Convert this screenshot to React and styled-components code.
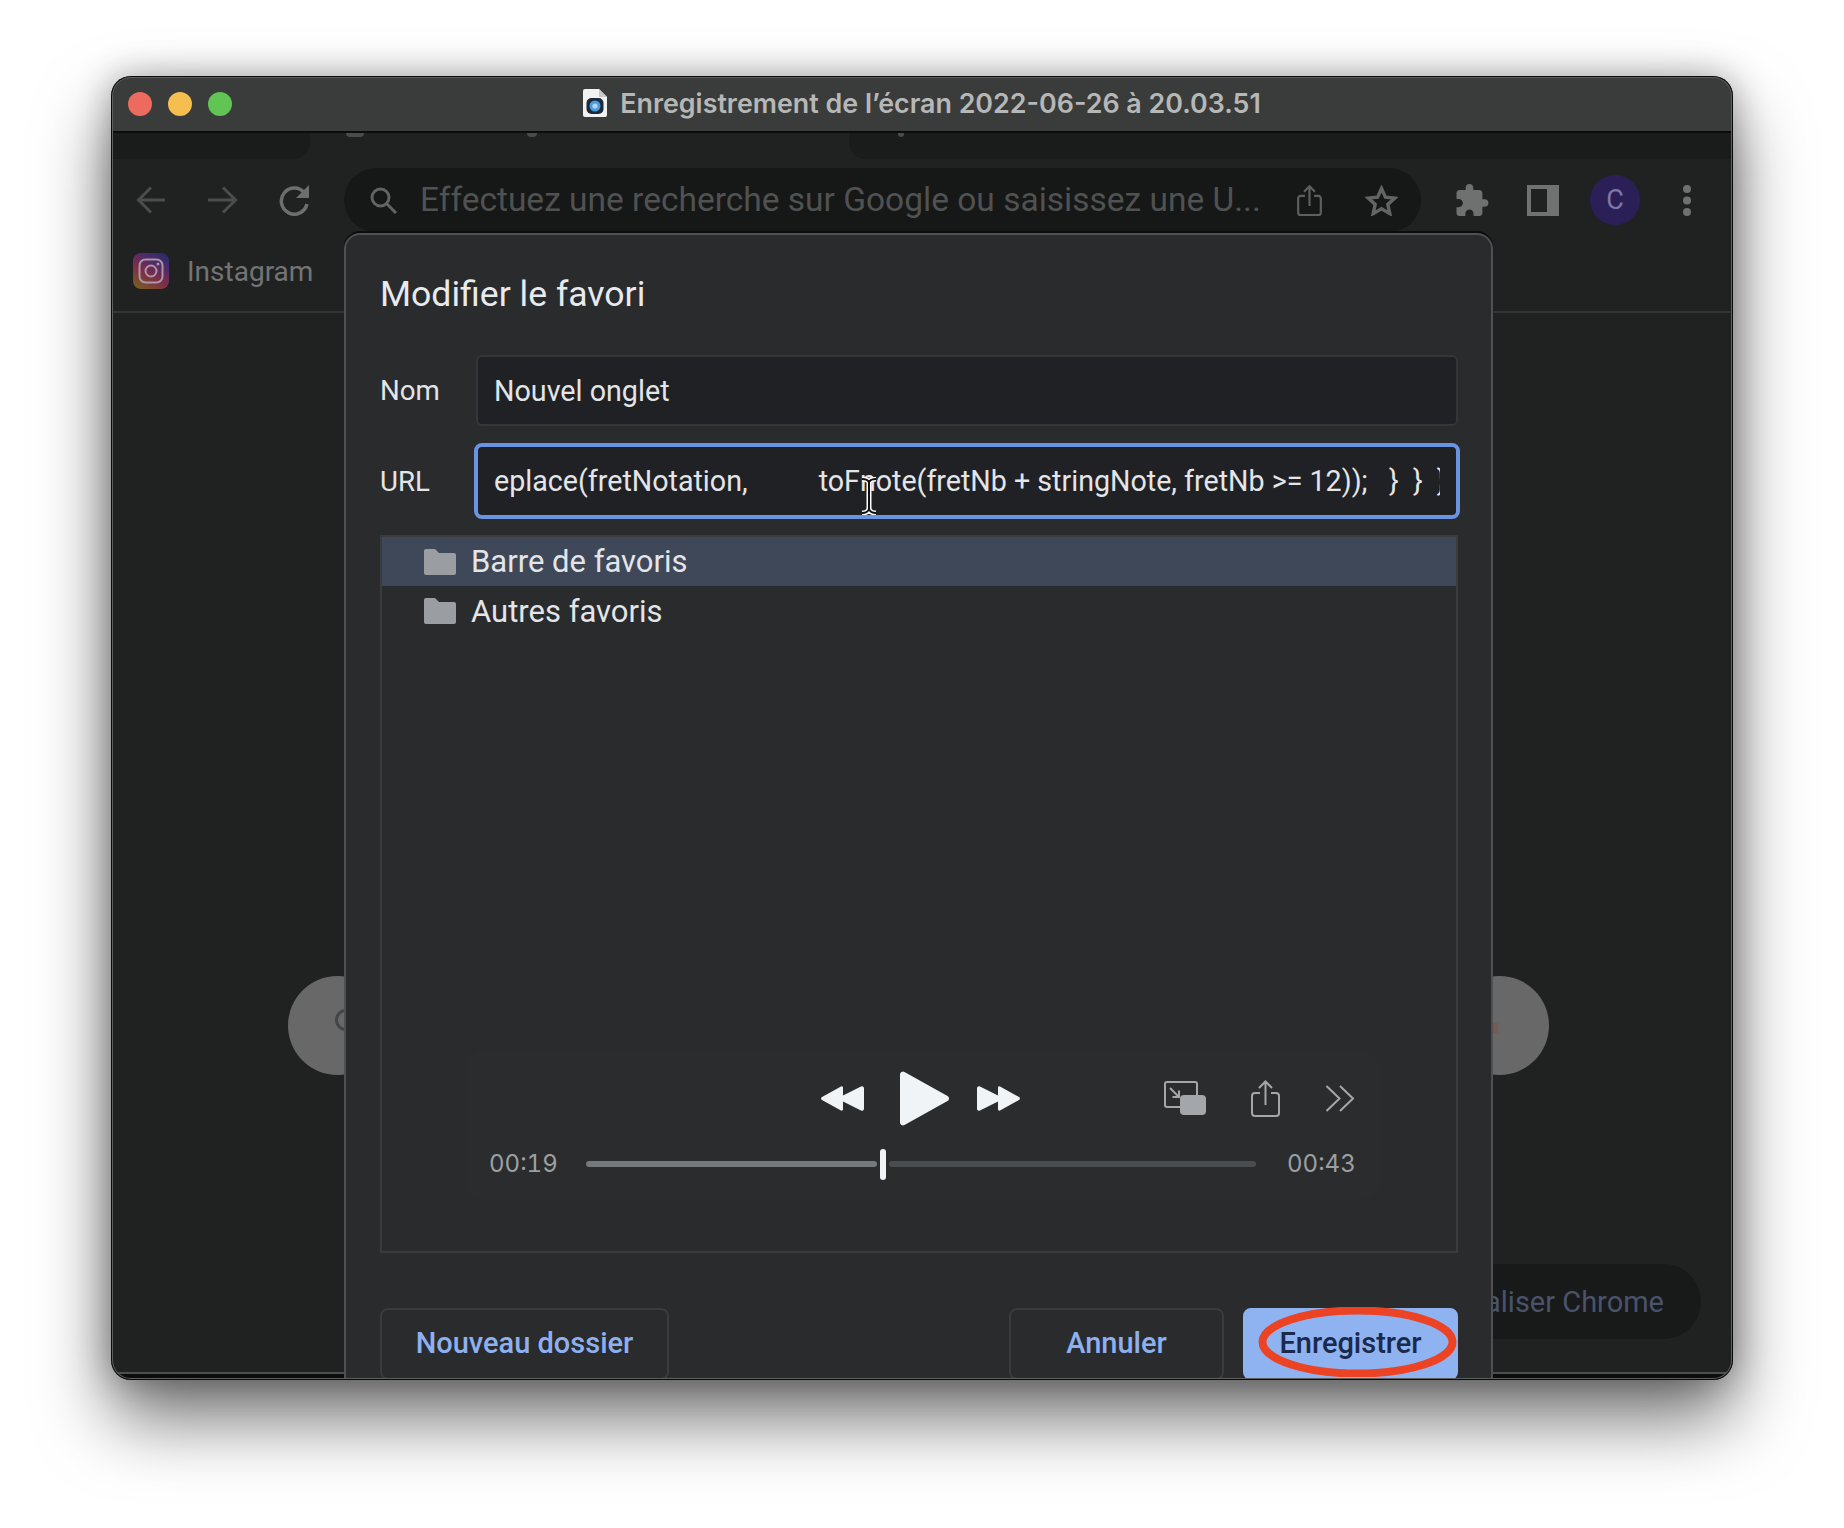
import React from 'react'
import styled, { createGlobalStyle } from 'styled-components'

const GlobalStyle = createGlobalStyle`
  html, body {
    margin: 0;
    padding: 0;
    background: #ffffff;
  }
  body {
    font-family: Roboto, "Liberation Sans", sans-serif;
  }
`

const Page = styled.div`
  width: 1844px;
  height: 1528px;
  padding: 76px 111px 0 111px;
  box-sizing: border-box;
  background: #ffffff;
  overflow: hidden;
`

const Window = styled.div`
  position: relative;
  width: 1622px;
  height: 1304px;
  border-radius: 20px;
  overflow: hidden;
  display: flex;
  flex-direction: column;
  background: #202222;
`

const WindowShadow = styled.div`
  border-radius: 20px;
  width: 1622px;
  box-shadow: 0 38px 72px rgba(0, 0, 0, 0.56), 0 0 34px rgba(0, 0, 0, 0.3);
`

const WindowEdge = styled.div`
  position: absolute;
  inset: 0;
  border-radius: 20px;
  pointer-events: none;
  box-shadow: inset 0 0 0 1px #0a0a0a, inset 0 0 0 2px #5e5f5f;
`

const TitleBar = styled.div`
  flex: none;
  height: 55px;
  display: grid;
  grid-template-columns: 1fr auto 1fr;
  align-items: center;
  padding: 0 17px;
  background: #3a3c3b;
  border-bottom: 2px solid #0c0c0c;
`

const Lights = styled.div`
  display: flex;
  gap: 16px;
`

const Light = styled.span`
  width: 24px;
  height: 24px;
  border-radius: 50%;
  background: ${({ $color }) => $color};
`

const WindowTitle = styled.div`
  display: flex;
  align-items: center;
  gap: 13px;
  padding-bottom: 2px;
  font-family: Inter, Roboto, sans-serif;
  font-size: 26.85px;
  font-weight: 600;
  color: #b6b7b7;
  white-space: nowrap;
`

const TabStrip = styled.div`
  flex: none;
  height: 26px;
  display: grid;
  grid-template-columns: 199px 539px 1fr;
  background: #202222;
`

const OtherTab = styled.div`
  background: #1a1b1b;
  border-radius: ${({ $side }) => ($side === 'left' ? '0 0 16px 0' : '0 0 0 16px')};
  padding-left: 49px;
`

const ActiveTab = styled.div`
  display: flex;
  align-items: flex-start;
  padding-left: 36px;
  gap: 163px;
`

const TabRemnant = styled.span`
  display: block;
  width: ${({ $w }) => $w}px;
  height: 4px;
  border-radius: 0 0 8px 8px;
  background: #4a4b4b;
`

const Toolbar = styled.div`
  flex: none;
  height: 82px;
  display: flex;
  align-items: center;
  padding-left: 25px;
  background: #202222;
`

const Slot = styled.span`
  display: inline-flex;
  flex: none;
  margin-left: ${({ $ml }) => ($ml === 'auto' ? 'auto' : `${$ml || 0}px`)};
`

const Omnibox = styled.div`
  flex: none;
  width: 1077px;
  height: 64px;
  margin-left: 34px;
  box-sizing: border-box;
  display: flex;
  align-items: center;
  padding: 0 23px 0 26px;
  border-radius: 32px;
  background: #161717;
`

const OmniText = styled.span`
  margin-left: 23px;
  padding-bottom: 2px;
  font-size: 33.5px;
  color: #505151;
  white-space: nowrap;
`

const Avatar = styled.span`
  flex: none;
  width: 50px;
  height: 50px;
  margin-left: 31px;
  display: flex;
  align-items: center;
  justify-content: center;
  border-radius: 50%;
  background: #2b1f58;
  color: #7f78a6;
  font-size: 27px;
`

const BookmarkBar = styled.div`
  flex: none;
  height: 72px;
  box-sizing: border-box;
  display: flex;
  align-items: center;
  gap: 18px;
  padding: 0 0 10px 22px;
  border-bottom: 2px solid #333535;
  background: #202222;
`

const BookmarkLabel = styled.span`
  font-size: 28px;
  color: #737474;
`

const NewTabArea = styled.div`
  position: relative;
  flex: 1;
  display: flex;
  justify-content: space-between;
  align-items: flex-start;
  padding: 663px 184px 0 177px;
  background: #202222;
`

const Shortcut = styled.div`
  position: relative;
  width: 99px;
  height: 99px;
  border-radius: 50%;
  background: #686868;
`

const ShortcutRing = styled.span`
  position: absolute;
  left: 47px;
  top: 33px;
  width: 16px;
  height: 16px;
  border: 3px solid #454545;
  border-radius: 50%;
`

const ShortcutMark = styled.span`
  position: absolute;
  left: 40px;
  top: 47px;
  width: 8px;
  height: 10px;
  background: #7a5858;
`

const CustomizeButton = styled.div`
  position: absolute;
  right: 32px;
  bottom: 33px;
  height: 75px;
  padding: 0 37px 0 60px;
  display: flex;
  align-items: center;
  border-radius: 38px;
  background: #181919;
  color: #49536c;
  font-size: 29px;
  white-space: nowrap;
`

const WindowFoot = styled.div`
  flex: none;
  height: 6px;
  border-top: 2px solid #4c4d4d;
  background: #0c0c0c;
`

const Dialog = styled.div`
  position: absolute;
  left: 233px;
  top: 157px;
  width: 1149px;
  height: 1147px;
  box-sizing: border-box;
  padding: 38px 33px 0 34px;
  border: 2px solid #4f5051;
  border-bottom: 0;
  border-radius: 16px 16px 0 0;
  background: #292b2d;
  box-shadow: 0 -2px 0 #0c0c0c;
  color: #e8eaed;
`

const DialogTitle = styled.h2`
  margin: 0 0 42px;
  height: 40px;
  line-height: 42px;
  font-size: 35.6px;
  font-weight: 400;
  color: #e8eaed;
`

const FieldRow = styled.div`
  display: grid;
  grid-template-columns: 96px minmax(0, 1fr);
  align-items: center;
  margin-bottom: ${({ $gap }) => $gap}px;
`

const FieldLabel = styled.label`
  font-size: 27.7px;
  color: #e3e5e8;
`

const NameField = styled.div`
  height: 71px;
  box-sizing: border-box;
  display: flex;
  align-items: center;
  padding: 0 16px;
  border: 2px solid #35363a;
  border-radius: 6px;
  background: #202124;
  font-size: 28.7px;
  color: #e3e5e8;
`

const UrlField = styled.div`
  position: relative;
  min-width: 0;
  height: 76px;
  margin: 0 -2px;
  box-sizing: border-box;
  display: flex;
  align-items: center;
  padding: 0 16px;
  border: 4px solid #6a93e2;
  border-radius: 8px;
  background: #202124;
  font-size: 28.65px;
  color: #e3e5e8;
`

const UrlText = styled.span`
  flex: 1;
  min-width: 0;
  overflow: hidden;
  white-space: pre;
`

const TextCursor = styled.svg`
  position: absolute;
  left: 381px;
  top: 30px;
`

const FolderTree = styled.div`
  position: relative;
  height: 718px;
  box-sizing: border-box;
  border: 2px solid #3a3b3e;
  background: #292b2d;
`

const FolderRow = styled.div`
  height: ${({ $h }) => $h}px;
  display: flex;
  align-items: center;
  gap: 15px;
  padding-left: 42px;
  font-size: 31px;
  color: #e3e5e8;
  background: ${({ $selected }) => ($selected ? '#3f4859' : 'transparent')};
`

const Player = styled.div`
  position: absolute;
  left: 83px;
  top: 513px;
  width: 915px;
  height: 150px;
  box-sizing: border-box;
  padding: 0 27px 0 24px;
  border-radius: 20px;
  background: #2a2c2e;
  display: flex;
  flex-direction: column;
`

const PlayerControls = styled.div`
  height: 96px;
  display: flex;
  align-items: center;
  padding-left: 332px;
`

const PlayerTimeline = styled.div`
  height: 36px;
  display: flex;
  align-items: center;
  gap: 31px;
`

const TimeLabel = styled.span`
  flex: none;
  width: 66px;
  padding-bottom: 2px;
  font-family: Inter, Roboto, sans-serif;
  font-size: 24px;
  font-variant-numeric: tabular-nums;
  color: #9da0a2;
  white-space: nowrap;
`

const Track = styled.div`
  flex: 1;
  display: flex;
  align-items: center;
  gap: 3px;
`

const TrackPart = styled.div`
  height: 6px;
  border-radius: 3px;
  background: ${({ $done }) => ($done ? '#75797b' : '#4a4d4f')};
  flex: ${({ $done }) => ($done ? '0 0 291px' : '1')};
`

const TrackKnob = styled.div`
  flex: none;
  width: 6px;
  height: 31px;
  border-radius: 3px;
  background: #f0f4f7;
`

const DialogFooter = styled.div`
  margin-top: 55px;
  height: 72px;
  display: flex;
  gap: 19px;
`

const FooterButton = styled.button`
  position: relative;
  width: ${({ $w }) => $w}px;
  height: 72px;
  margin-left: ${({ $push }) => ($push ? 'auto' : '0')};
  padding: 0 0 3px;
  border: 2px solid ${({ $primary }) => ($primary ? '#8fb2f1' : '#3a3b3e')};
  border-radius: 8px;
  background: ${({ $primary }) => ($primary ? '#8fb2f1' : 'transparent')};
  color: ${({ $primary }) => ($primary ? '#1b2a4c' : '#8eb0ef')};
  font-family: Roboto, sans-serif;
  font-size: 29px;
  font-weight: 500;
`

const SaveMark = styled.svg`
  position: absolute;
  left: 13px;
  top: -3px;
`

const DocIcon = () => (
  <svg width="24" height="28" viewBox="0 0 24 28">
    <path d="M2 0h14l8 8v18a2 2 0 0 1-2 2H2a2 2 0 0 1-2-2V2a2 2 0 0 1 2-2z" fill="#f2f2f2" />
    <path d="M16 0l8 8h-8z" fill="#c9c9c9" />
    <rect x="3.500" y="9" width="17" height="16" rx="5" fill="#1c2a3a" />
    <circle cx="12" cy="17" r="5.500" fill="#4a9ce0" />
    <circle cx="12" cy="17" r="2.600" fill="#b8d2ea" />
  </svg>
)

const ArrowLeft = ({ color }) => (
  <svg width="29" height="28" viewBox="0 0 29 28" fill="none" stroke={color} strokeWidth="3">
    <path d="M29 14H3M15 1.500L2.500 14 15 26.500" />
  </svg>
)

const ArrowRight = ({ color }) => (
  <svg width="30" height="28" viewBox="0 0 30 28" fill="none" stroke={color} strokeWidth="3">
    <path d="M0 14h27M15 1.500L27.500 14 15 26.500" />
  </svg>
)

const Reload = () => (
  <svg width="31" height="31" viewBox="0 0 31 31" fill="none">
    <path d="M25.500 8A13 13 0 1 0 28 19" stroke="#6d6e6e" strokeWidth="3.500" />
    <path d="M30 0v13H17z" fill="#6d6e6e" />
  </svg>
)

const SearchGlyph = () => (
  <svg width="27" height="27" viewBox="0 0 27 27" fill="none" stroke="#626363" strokeWidth="3">
    <circle cx="10.500" cy="10.500" r="8.500" />
    <path d="M16.500 16.500L26 26" />
  </svg>
)

const ShareGlyph = ({ width, height, color, stroke }) => (
  <svg width={width} height={height} viewBox="0 0 29 37" fill="none" stroke={color} strokeWidth={stroke}>
    <path d="M9 13H4a3 3 0 0 0-3 3v17a3 3 0 0 0 3 3h21a3 3 0 0 0 3-3V16a3 3 0 0 0-3-3h-5" />
    <path d="M14.500 25V2M8 8l6.500-6.500L21 8" />
  </svg>
)

const StarGlyph = () => (
  <svg width="33" height="31" viewBox="0 0 33 31" fill="none" stroke="#636464" strokeWidth="3.400" strokeLinejoin="miter">
    <path d="M16.500 3.500l3.900 8.600 9.400 1-7 6.300 2 9.200-8.300-4.800-8.300 4.800 2-9.200-7-6.300 9.400-1z" />
  </svg>
)

const PuzzleGlyph = () => (
  <svg width="33" height="32" viewBox="2 1 21 21" fill="#6f7070">
    <path d="M20.500 11H19V7c0-1.100-.9-2-2-2h-4V3.500C13 2.120 11.880 1 10.500 1S8 2.120 8 3.500V5H4c-1.100 0-1.990.9-1.990 2v3.800H3.500c1.490 0 2.700 1.210 2.700 2.700s-1.210 2.700-2.700 2.700H2V20c0 1.100.9 2 2 2h3.800v-1.500c0-1.490 1.210-2.700 2.700-2.700 1.490 0 2.700 1.210 2.700 2.700V22H17c1.100 0 2-.9 2-2v-4h1.500c1.380 0 2.500-1.120 2.500-2.500S21.880 11 20.500 11z" />
  </svg>
)

const SidePanelGlyph = () => (
  <svg width="32" height="31" viewBox="0 0 32 31">
    <path d="M0 0h32v31H0zM4 4v23h16V4z" fill="#707171" fillRule="evenodd" />
  </svg>
)

const DotsGlyph = () => (
  <svg width="8" height="31" viewBox="0 0 8 31" fill="#6f7070">
    <circle cx="4" cy="4" r="4" />
    <circle cx="4" cy="15.500" r="4" />
    <circle cx="4" cy="27" r="4" />
  </svg>
)

const InstagramGlyph = () => (
  <svg width="36" height="36" viewBox="0 0 36 36" fill="none">
    <defs>
      <linearGradient id="ig" x1="0.2" y1="1" x2="0.8" y2="0">
        <stop offset="0" stopColor="#7a5a22" />
        <stop offset="0.4" stopColor="#7e2c48" />
        <stop offset="0.7" stopColor="#562a68" />
        <stop offset="1" stopColor="#2c2c6c" />
      </linearGradient>
    </defs>
    <rect width="36" height="36" rx="8" fill="url(#ig)" />
    <rect x="6.500" y="6.500" width="23" height="23" rx="6" stroke="#a898a6" strokeWidth="2" />
    <circle cx="18" cy="18" r="5.500" stroke="#a898a6" strokeWidth="2" />
    <circle cx="25" cy="11" r="1.500" fill="#a898a6" />
  </svg>
)

const FolderGlyph = () => (
  <svg width="32" height="26" viewBox="0 0 32 26" fill="#9a9ea2">
    <path d="M2 0h9l4 4h15a2 2 0 0 1 2 2v18a2 2 0 0 1-2 2H2a2 2 0 0 1-2-2V2a2 2 0 0 1 2-2z" />
  </svg>
)

const Transport = ({ flip }) => (
  <svg width="46" height="25" viewBox="0 0 46 25" fill="#f0f4f7" style={flip ? { transform: 'scaleX(-1)' } : undefined}>
    <path d="M1 11L20 0.500a1.500 1.500 0 0 1 2 1.300v7.700L40 .500a2 2 0 0 1 3 1.500v21a2 2 0 0 1-3 1.500L22 15.500v7.700a1.500 1.500 0 0 1-2 1.300L1 14a1.700 1.700 0 0 1 0-3z" />
  </svg>
)

const PlayGlyph = () => (
  <svg width="49" height="55" viewBox="0 0 49 55" fill="#f0f4f7">
    <path d="M0 3.500a3 3 0 0 1 4.500-2.600l43 24a3 3 0 0 1 0 5.200l-43 24A3 3 0 0 1 0 51.500z" />
  </svg>
)

const PipGlyph = () => (
  <svg width="42" height="34" viewBox="0 0 42 34" fill="none">
    <path d="M16 26H3a2 2 0 0 1-2-2V3a2 2 0 0 1 2-2h28a2 2 0 0 1 2 2v11" stroke="#a4a7a9" strokeWidth="2" />
    <rect x="16" y="14" width="26" height="20" rx="4" fill="#a4a7a9" />
    <path d="M6 7l9 9M15 9.500V16H8.500" stroke="#a4a7a9" strokeWidth="2" />
  </svg>
)

const ChevronsGlyph = () => (
  <svg width="28" height="27" viewBox="0 0 28 27" fill="none" stroke="#a4a7a9" strokeWidth="2">
    <path d="M0.500 1l13 12.500L0.500 26M14 1l13 12.500L14 26" />
  </svg>
)

const App = () => (
  <Page>
    <GlobalStyle />
    <WindowShadow>
      <Window>
        <TitleBar>
          <Lights>
            <Light $color="#ec6a5e" />
            <Light $color="#f4bf4f" />
            <Light $color="#61c554" />
          </Lights>
          <WindowTitle>
            <DocIcon />
            Enregistrement de l’écran 2022-06-26 à 20.03.51
          </WindowTitle>
          <span />
        </TitleBar>

        <TabStrip>
          <OtherTab $side="left" />
          <ActiveTab>
            <TabRemnant $w={18} />
            <TabRemnant $w={10} />
          </ActiveTab>
          <OtherTab $side="right">
            <TabRemnant $w={6} />
          </OtherTab>
        </TabStrip>

        <Toolbar>
          <Slot><ArrowLeft color="#4b4c4c" /></Slot>
          <Slot $ml={43}><ArrowRight color="#4b4c4c" /></Slot>
          <Slot $ml={41}><Reload /></Slot>
          <Omnibox>
            <SearchGlyph />
            <OmniText>Effectuez une recherche sur Google ou saisissez une U...</OmniText>
            <Slot $ml="auto"><ShareGlyph width={25} height={31} color="#5d5e5e" stroke={2.6} /></Slot>
            <Slot $ml={43}><StarGlyph /></Slot>
          </Omnibox>
          <Slot $ml={35}><PuzzleGlyph /></Slot>
          <Slot $ml={38}><SidePanelGlyph /></Slot>
          <Avatar>C</Avatar>
          <Slot $ml={43}><DotsGlyph /></Slot>
        </Toolbar>

        <BookmarkBar>
          <InstagramGlyph />
          <BookmarkLabel>Instagram</BookmarkLabel>
        </BookmarkBar>

        <NewTabArea>
          <Shortcut><ShortcutRing /></Shortcut>
          <Shortcut><ShortcutMark /></Shortcut>
          <CustomizeButton>Personnaliser Chrome</CustomizeButton>
        </NewTabArea>
        <WindowFoot />

        <Dialog>
          <DialogTitle>Modifier le favori</DialogTitle>
          <FieldRow $gap={17}>
            <FieldLabel>Nom</FieldLabel>
            <NameField>Nouvel onglet</NameField>
          </FieldRow>
          <FieldRow $gap={16}>
            <FieldLabel>URL</FieldLabel>
            <UrlField>
              <UrlText>{'eplace(fretNotation,          toFnote(fretNb + stringNote, fretNb >= 12));   }  }  });'}</UrlText>
              <TextCursor width="20" height="38" viewBox="0 0 20 38" fill="none">
                <path d="M3 2c3 0 6 1 7 3 1-2 4-3 7-3M10 5v27M3 36c3 0 6-1 7-4 1 3 4 4 7 4" stroke="#ffffff" strokeWidth="5" />
                <path d="M3 2c3 0 6 1 7 3 1-2 4-3 7-3M10 5v27M3 36c3 0 6-1 7-4 1 3 4 4 7 4" stroke="#111111" strokeWidth="2" />
              </TextCursor>
            </UrlField>
          </FieldRow>

          <FolderTree>
            <FolderRow $h={49} $selected>
              <FolderGlyph />
              Barre de favoris
            </FolderRow>
            <FolderRow $h={50}>
              <FolderGlyph />
              Autres favoris
            </FolderRow>

            <Player>
              <PlayerControls>
                <Slot><Transport /></Slot>
                <Slot $ml={33}><PlayGlyph /></Slot>
                <Slot $ml={25}><Transport flip /></Slot>
                <Slot $ml={144}><PipGlyph /></Slot>
                <Slot $ml={45}><ShareGlyph width={29} height={37} color="#a4a7a9" stroke={2} /></Slot>
                <Slot $ml={46}><ChevronsGlyph /></Slot>
              </PlayerControls>
              <PlayerTimeline>
                <TimeLabel>00:19</TimeLabel>
                <Track>
                  <TrackPart $done />
                  <TrackKnob />
                  <TrackPart />
                </Track>
                <TimeLabel>00:43</TimeLabel>
              </PlayerTimeline>
            </Player>
          </FolderTree>

          <DialogFooter>
            <FooterButton $w={289}>Nouveau dossier</FooterButton>
            <FooterButton $w={215} $push>Annuler</FooterButton>
            <FooterButton $w={215} $primary>
              Enregistrer
              <SaveMark width="199" height="70" viewBox="0 0 199 70" fill="none">
                <ellipse cx="99.500" cy="35" rx="95" ry="31.500" stroke="#ec4325" strokeWidth="8" />
              </SaveMark>
            </FooterButton>
          </DialogFooter>
        </Dialog>
        <WindowEdge />
      </Window>
    </WindowShadow>
  </Page>
)

export default App
